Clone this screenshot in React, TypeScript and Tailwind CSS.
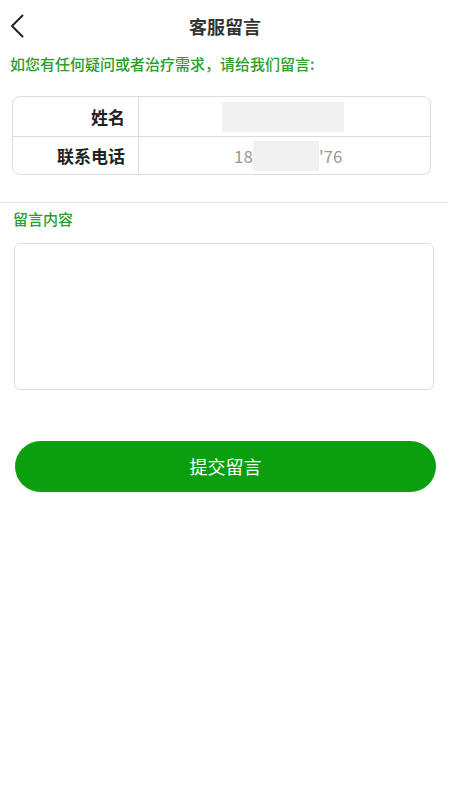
import React from "react";

const font = { fontFamily: '"Noto Sans CJK SC", "Noto Sans", sans-serif' };

export default function App() {
  return (
    <div className="min-h-[800px] w-[450px] bg-white" style={font}>
      {/* Header */}
      <div className="relative flex h-[52px] items-center justify-center">
        <button className="absolute left-[8px] top-[12px] p-[2px]">
          <svg width="14" height="24" viewBox="0 0 14 24" fill="none">
            <path d="M12.5 1.5 L2 12 L12.5 22.5" stroke="#222" strokeWidth="2" strokeLinecap="round" strokeLinejoin="round" />
          </svg>
        </button>
        <h1 className="text-[18px] font-bold text-[#333]">客服留言</h1>
      </div>

      {/* Tip */}
      <p className="ml-[10px] mt-[2px] text-[15px] leading-[20px] font-medium text-[#2b9d2b]">
        如您有任何疑问或者治疗需求，请给我们留言:
      </p>

      {/* Info table */}
      <div className="ml-[12px] mr-[19px] mt-[22px] overflow-hidden rounded-[8px] border border-[#dcdcdc]">
        <div className="flex h-[40px] border-b border-[#dcdcdc]">
          <div className="flex w-[126px] items-center justify-end border-r border-[#dcdcdc] pr-[13px] text-[17px] font-bold text-[#222]">
            姓名
          </div>
          <div className="flex flex-1 items-center pl-[83px]">
            <span className="block h-[30px] w-[122px] bg-[#f1f1f1]" />
          </div>
        </div>
        <div className="flex h-[37px]">
          <div className="flex w-[126px] items-center justify-end border-r border-[#dcdcdc] pr-[13px] text-[17px] font-bold text-[#222]">
            联系电话
          </div>
          <div className="flex flex-1 items-center pl-[95px] text-[17px] text-[#999]">
            <span>18</span>
            <span className="block h-[30px] w-[66px] bg-[#f1f1f1]" />
            <span>'76</span>
          </div>
        </div>
      </div>

      {/* Divider */}
      <div className="mt-[27px] mr-[3px] h-px bg-[#e3e3e3]" />

      <p className="ml-[13px] mt-[6px] text-[15px] leading-[20px] font-medium text-[#2b9d2b]">留言内容</p>

      <textarea className="mx-[14px] mt-[14px] block h-[147px] w-[420px] resize-none rounded-[6px] border border-[#dcdcdc] p-2 text-[15px] outline-none" />

      <button className="mx-[15px] mt-[51px] flex h-[51px] w-[421px] items-center justify-center rounded-full bg-[#0b9f10] text-[18px] text-white">
        提交留言
      </button>
    </div>
  );
}
